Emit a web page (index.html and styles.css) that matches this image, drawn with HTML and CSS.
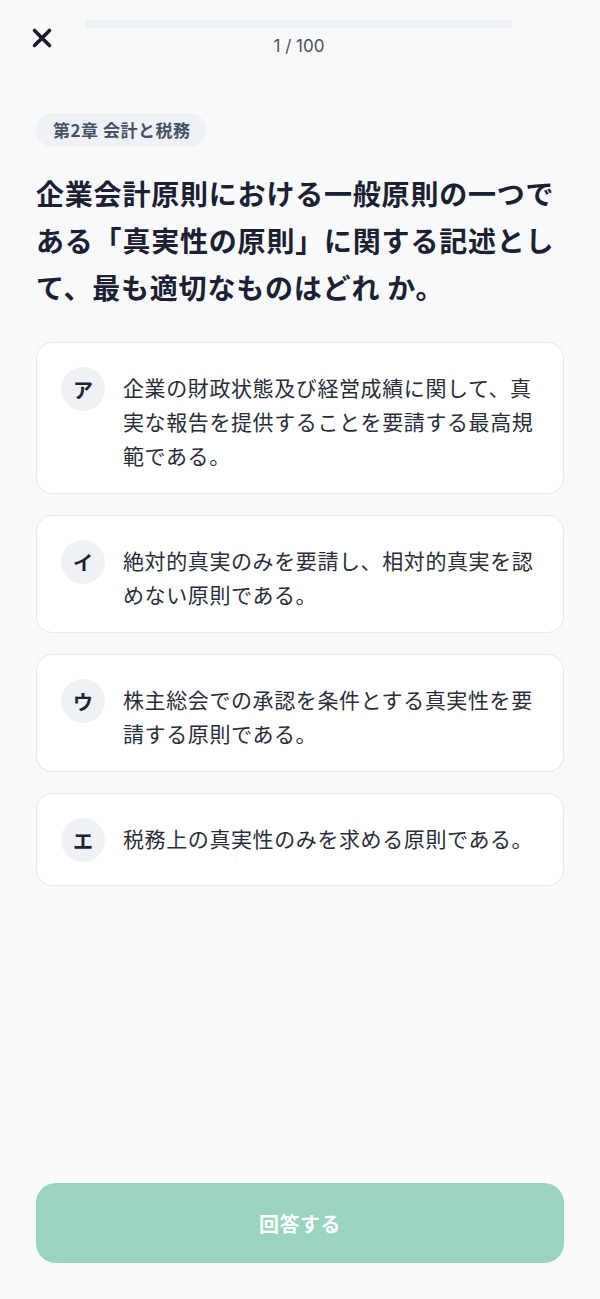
FILE: index.html
```html
<!DOCTYPE html>
<html lang="ja">
<head>
<meta charset="utf-8">
<title>問題 1 / 100</title>
<link rel="stylesheet" href="styles.css">
</head>
<body>
<div class="page">
  <header class="header">
    <button class="close" aria-label="閉じる">
      <svg width="22" height="22" viewBox="0 0 22 22"><path d="M3.5 3.5 L18.5 18.5 M18.5 3.5 L3.5 18.5" stroke="#161a2c" stroke-width="3.6" stroke-linecap="round" fill="none"/></svg>
    </button>
    <div class="progress-wrap">
      <div class="progress"><div class="progress-fill" style="width:1%"></div></div>
      <div class="count">1 / 100</div>
    </div>
  </header>

  <main class="main">
    <div class="tag">第2章 会計と税務</div>
    <h1 class="question">企業会計原則における一般原則の一つである「真実性の原則」に関する記述として、最も適切なものはどれ か。</h1>

    <ul class="options">
      <li class="option">
        <span class="badge">ア</span>
        <span class="option-text">企業の財政状態及び経営成績に関して、真実な報告を提供することを要請する最高規範である。</span>
      </li>
      <li class="option">
        <span class="badge">イ</span>
        <span class="option-text">絶対的真実のみを要請し、相対的真実を認めない原則である。</span>
      </li>
      <li class="option">
        <span class="badge">ウ</span>
        <span class="option-text">株主総会での承認を条件とする真実性を要請する原則である。</span>
      </li>
      <li class="option">
        <span class="badge">エ</span>
        <span class="option-text">税務上の真実性のみを求める原則である。</span>
      </li>
    </ul>
  </main>

  <footer class="footer">
    <button class="submit">回答する</button>
  </footer>
</div>
</body>
</html>
```

FILE: styles.css
```css
* { box-sizing: border-box; }

html, body {
  margin: 0;
  padding: 0;
  background: #f8f9fa;
}

body {
  font-family: "Noto Sans CJK JP", "Noto Sans", sans-serif;
  color: #1c2233;
}

.page {
  width: 600px;
  min-height: 100vh;
  display: flex;
  flex-direction: column;
}

.header {
  display: grid;
  grid-template-columns: 85px 1fr 87px;
  padding-top: 20px;
}

.close {
  margin: 7px 0 0 31px;
  padding: 0;
  border: 0;
  background: none;
  width: 22px;
  height: 22px;
  display: flex;
}

.progress-wrap {
  display: flex;
  flex-direction: column;
  align-items: stretch;
}

.progress {
  height: 8px;
  border-radius: 4px;
  background: #eef1f5;
  overflow: hidden;
}

.progress-fill {
  height: 100%;
  background: #e3f2ed;
}

.count {
  margin-top: 7px;
  text-align: center;
  font-family: Inter, "Noto Sans CJK JP", sans-serif;
  font-size: 17px;
  line-height: 22px;
  color: #4a505e;
}

.main {
  padding: 0 36px;
}

.tag {
  display: inline-block;
  margin-top: 56px;
  height: 34px;
  padding: 0 16px 0 17px;
  border-radius: 17px;
  background: #eef2f6;
  color: #465064;
  font-size: 17px;
  font-weight: 700;
  letter-spacing: 0.5px;
  line-height: 34px;
}

.question {
  margin: 23px 0 0;
  font-size: 28px;
  font-weight: 700;
  line-height: 47px;
  letter-spacing: 0.8px;
  color: #1b2132;
}

.options {
  list-style: none;
  margin: 31px 0 0;
  padding: 0;
  display: flex;
  flex-direction: column;
  gap: 21px;
}

.option {
  display: flex;
  align-items: flex-start;
  gap: 18px;
  padding: 24px 24px 21px;
  background: #ffffff;
  border: 1px solid #e5e8ec;
  border-radius: 16px;
}

.badge {
  flex: 0 0 44px;
  width: 44px;
  height: 44px;
  margin-bottom: 2px;
  border-radius: 50%;
  background: #eef2f7;
  display: flex;
  align-items: center;
  justify-content: center;
  font-size: 20px;
  font-weight: 700;
  color: #1d2232;
}

.option-text {
  flex: 1;
  font-size: 21px;
  line-height: 34px;
  letter-spacing: 0.6px;
  color: #282d39;
  margin-top: 3px;
}

.footer {
  margin-top: auto;
  padding: 0 36px 36px;
}

.submit {
  width: 100%;
  height: 80px;
  border: 0;
  border-radius: 20px;
  background: #9ad3c0;
  color: #ffffff;
  font-family: "Noto Sans CJK JP", sans-serif;
  font-size: 20px;
  font-weight: 700;
  letter-spacing: 0.5px;
}
```
